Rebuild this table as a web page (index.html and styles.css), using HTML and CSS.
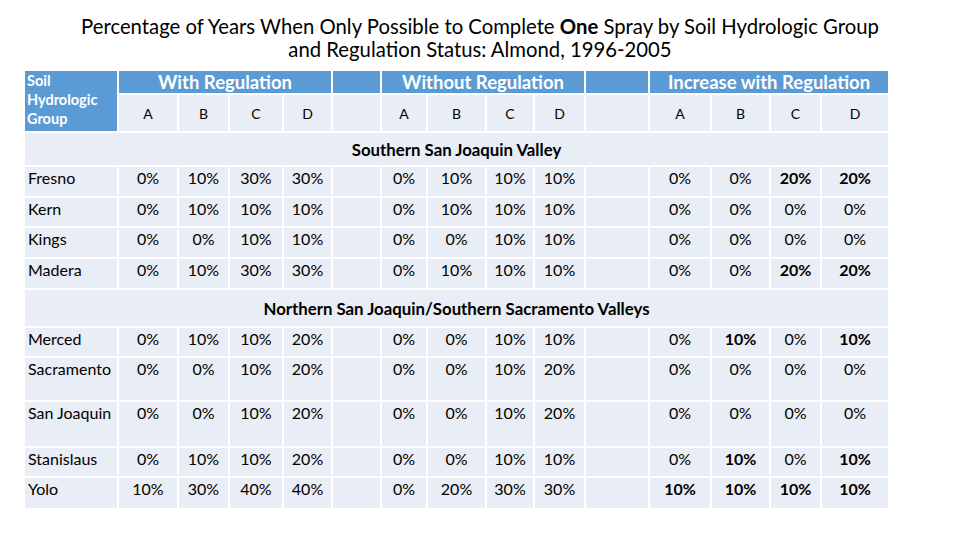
FILE: index.html
```html
<!DOCTYPE html>
<html>
<head>
<meta charset="utf-8">
<link rel="stylesheet" href="styles.css">
</head>
<body>
<div class="slide">
  <h1 class="title">Percentage of Years When Only Possible to Complete <b>One</b> Spray by Soil Hydrologic Group<br>and Regulation Status: Almond, 1996-2005</h1>
  <table class="grid">
    <colgroup>
      <col class="c-label"><col class="c1"><col class="c2"><col class="c3"><col class="c4"><col class="c5">
      <col class="c6"><col class="c7"><col class="c8"><col class="c9"><col class="c10">
      <col class="c11"><col class="c12"><col class="c13"><col class="c14">
    </colgroup>
    <tr class="h1">
      <th class="lbl" rowspan="2">Soil<br>Hydrologic<br>Group</th>
      <th class="grp" colspan="4">With Regulation</th>
      <th class="grp"></th>
      <th class="grp" colspan="4">Without Regulation</th>
      <th class="grp"></th>
      <th class="grp" colspan="4">Increase with Regulation</th>
    </tr>
    <tr class="h2">
      <td>A</td><td>B</td><td>C</td><td>D</td><td></td>
      <td>A</td><td>B</td><td>C</td><td>D</td><td></td>
      <td>A</td><td>B</td><td>C</td><td>D</td>
    </tr>
    <tr class="sec s1"><td colspan="15">Southern San Joaquin Valley</td></tr>
    <tr class="row r29">
      <td class="name">Fresno</td><td>0%</td><td>10%</td><td>30%</td><td>30%</td><td></td>
      <td>0%</td><td>10%</td><td>10%</td><td>10%</td><td></td>
      <td>0%</td><td>0%</td><td class="b">20%</td><td class="b">20%</td>
    </tr>
    <tr class="row r28">
      <td class="name">Kern</td><td>0%</td><td>10%</td><td>10%</td><td>10%</td><td></td>
      <td>0%</td><td>10%</td><td>10%</td><td>10%</td><td></td>
      <td>0%</td><td>0%</td><td>0%</td><td>0%</td>
    </tr>
    <tr class="row r29">
      <td class="name">Kings</td><td>0%</td><td>0%</td><td>10%</td><td>10%</td><td></td>
      <td>0%</td><td>0%</td><td>10%</td><td>10%</td><td></td>
      <td>0%</td><td>0%</td><td>0%</td><td>0%</td>
    </tr>
    <tr class="row r29">
      <td class="name">Madera</td><td>0%</td><td>10%</td><td>30%</td><td>30%</td><td></td>
      <td>0%</td><td>10%</td><td>10%</td><td>10%</td><td></td>
      <td>0%</td><td>0%</td><td class="b">20%</td><td class="b">20%</td>
    </tr>
    <tr class="sec s2"><td colspan="15">Northern San Joaquin/Southern Sacramento Valleys</td></tr>
    <tr class="row r28">
      <td class="name">Merced</td><td>0%</td><td>10%</td><td>10%</td><td>20%</td><td></td>
      <td>0%</td><td>0%</td><td>10%</td><td>10%</td><td></td>
      <td>0%</td><td class="b">10%</td><td>0%</td><td class="b">10%</td>
    </tr>
    <tr class="row r42">
      <td class="name">Sacramento</td><td>0%</td><td>0%</td><td>10%</td><td>20%</td><td></td>
      <td>0%</td><td>0%</td><td>10%</td><td>20%</td><td></td>
      <td>0%</td><td>0%</td><td>0%</td><td>0%</td>
    </tr>
    <tr class="row r44">
      <td class="name">San Joaquin</td><td>0%</td><td>0%</td><td>10%</td><td>20%</td><td></td>
      <td>0%</td><td>0%</td><td>10%</td><td>20%</td><td></td>
      <td>0%</td><td>0%</td><td>0%</td><td>0%</td>
    </tr>
    <tr class="row r28">
      <td class="name">Stanislaus</td><td>0%</td><td>10%</td><td>10%</td><td>20%</td><td></td>
      <td>0%</td><td>0%</td><td>10%</td><td>10%</td><td></td>
      <td>0%</td><td class="b">10%</td><td>0%</td><td class="b">10%</td>
    </tr>
    <tr class="row r30">
      <td class="name">Yolo</td><td>10%</td><td>30%</td><td>40%</td><td>40%</td><td></td>
      <td>0%</td><td>20%</td><td>30%</td><td>30%</td><td></td>
      <td class="b">10%</td><td class="b">10%</td><td class="b">10%</td><td class="b">10%</td>
    </tr>
  </table>
</div>
</body>
</html>
```

FILE: styles.css
```css
html, body {
  margin: 0;
  padding: 0;
  background: #ffffff;
}

.slide {
  width: 960px;
  height: 540px;
  font-family: Lato, "Open Sans", "Liberation Sans", sans-serif;
  color: #000;
  overflow: hidden;
}

.title {
  margin: 0;
  padding-top: 15px;
  height: 54px;
  font-size: 20.3px;
  font-weight: normal;
  line-height: 23px;
  text-align: center;
  white-space: nowrap;
}

.title b {
  font-weight: bold;
}

.grid {
  margin-left: 23px;
  border-collapse: separate;
  border-spacing: 2px;
  table-layout: fixed;
  width: 867px;
}

.c-label { width: 92px; }
.c1 { width: 58px; }
.c2 { width: 49px; }
.c3 { width: 52px; }
.c4 { width: 47px; }
.c5 { width: 47px; }
.c6 { width: 44px; }
.c7 { width: 57px; }
.c8 { width: 46px; }
.c9 { width: 49px; }
.c10 { width: 62px; }
.c11 { width: 60px; }
.c12 { width: 57px; }
.c13 { width: 49px; }
.c14 { width: 66px; }

.grid td, .grid th {
  padding: 0;
  background: #e9edf5;
  font-size: 16px;
  font-weight: normal;
  text-align: center;
  white-space: nowrap;
  overflow: visible;
}

.h1 th.grp {
  background: #5b9bd5;
  color: #fff;
  font-weight: bold;
  font-size: 18.5px;
  height: 22px;
  line-height: 22px;
  vertical-align: middle;
}

.h1 th.lbl {
  background: #5b9bd5;
  color: #fff;
  font-weight: bold;
  font-size: 14.5px;
  line-height: 19px;
  text-align: left;
  vertical-align: top;
  padding: 0 0 0 2px;
}

.h2 td {
  height: 36px;
  font-size: 14px;
  vertical-align: middle;
}

.sec td {
  font-weight: bold;
  font-size: 16.8px;
  vertical-align: middle;
  text-align: center;
}

.s1 td { height: 32px; }
.s2 td { height: 36px; }

.row td {
  vertical-align: top;
  padding-top: 1px;
  box-sizing: border-box;
  line-height: 19px;
}

.row td.name {
  text-align: left;
  padding-left: 3px;
}

.row td.b {
  font-weight: bold;
}

.r28 td { height: 28px; }
.r29 td { height: 29px; }
.r30 td { height: 30px; }
.r42 td { height: 42px; }
.r44 td { height: 44px; }
```
